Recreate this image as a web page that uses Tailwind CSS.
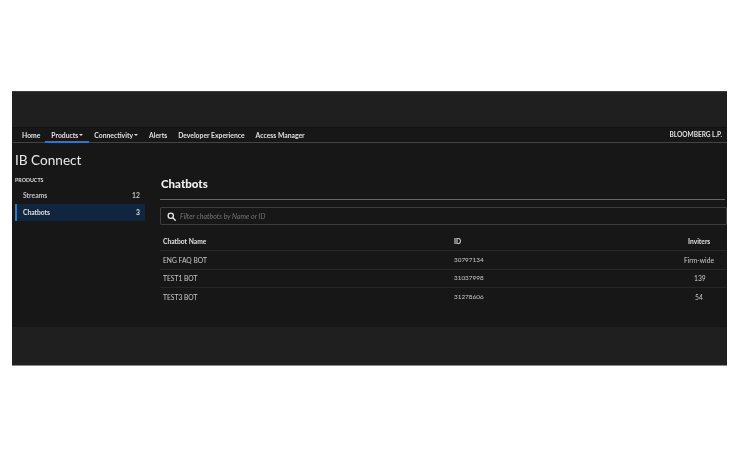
<!DOCTYPE html>
<html lang="en">
<head>
    <meta charset="UTF-8">
    <title>IB Connect</title>
    <script src="https://cdn.jsdelivr.net/npm/@tailwindcss/browser@4"></script>
</head>
<body class="bg-white font-['Lato','Liberation_Sans',sans-serif]">
    <div class="pt-[91px] pl-[12px] h-[463px] w-[750px] overflow-hidden">
        <div class="w-[715px] h-[275px] flex flex-col bg-[#1f1f1f] border-t border-b border-t-[#3a3a3a] border-b-[#8a8a8a] overflow-hidden blur-[0.3px]">
            <!-- top band -->
            <div class="h-[35px] shrink-0 bg-[#1f1f1f]"></div>

            <!-- nav -->
            <div class="h-[14px] shrink-0 flex items-stretch justify-between bg-[#171717] border-t border-[#111] border-b border-b-[#444] box-content text-[6.8px] text-[#e0e0e0] font-bold">
                <div class="flex items-center gap-[11px] pl-[10px]">
                    <span>Home</span>
                    <span class="relative h-full flex items-center">Products<span class="ml-[1px] border-x-[2px] border-t-[2px] border-x-transparent border-t-[#ddd]"></span><span class="absolute -left-[6px] -right-[6px] bottom-[-1px] h-[2px] bg-[#2a78c8]"></span></span>
                    <span class="flex items-center">Connectivity<span class="ml-[1px] border-x-[2px] border-t-[2px] border-x-transparent border-t-[#ddd]"></span></span>
                    <span>Alerts</span>
                    <span>Developer Experience</span>
                    <span>Access Manager</span>
                </div>
                <div class="flex items-center pr-[5px] text-[6.5px]">BLOOMBERG L.P.</div>
            </div>

            <!-- main -->
            <div class="h-[184px] shrink-0 bg-[#171717] flex">
                <aside class="w-[133px] shrink-0 pl-[3px]">
                    <h1 class="text-[13.6px] leading-[18px] text-[#e8e8e8] mt-[8px] font-normal">IB Connect</h1>
                    <div class="mt-[8px] text-[5.3px] leading-[7px] font-bold text-[#ddd]">PRODUCTS</div>
                    <div class="mt-[3px] h-[17px] flex items-center justify-between pl-[8px] pr-[5px] text-[6.8px] font-bold text-[#c4c4c4]">
                        <span>Streams</span><span>12</span>
                    </div>
                    <div class="h-[17px] flex items-center justify-between border-l-2 border-[#2a78c8] bg-[#10263f] pl-[6px] pr-[5px] text-[6.7px] font-bold text-[#e0e0e0]">
                        <span>Chatbots</span><span>3</span>
                    </div>
                </aside>

                <section class="flex-1 min-w-0 pl-[15px]">
                    <h2 class="mt-[34px] ml-[1px] text-[11.5px] leading-[14px] font-black text-[#f0f0f0]">Chatbots</h2>
                    <div class="mt-[8px] mr-[2px] h-[1px] bg-[#666]"></div>
                    <div class="mt-[7px] h-[18px] flex items-center border border-[#3d3d3d] rounded-[1px] pl-[6px]">
                        <svg class="w-[9px] h-[9px] text-[#e8e8e8]" viewBox="0 0 24 24" fill="none" stroke="currentColor" stroke-width="3.5" stroke-linecap="round"><circle cx="10" cy="10" r="7"/><path d="M15.5 15.5L22 22"/></svg>
                        <span class="ml-[4px] text-[7px] italic text-[#757575]">Filter chatbots by Name or ID</span>
                    </div>

                    <div class="mt-[7px] text-[6.7px]">
                        <div class="h-[19px] flex items-center border-b border-[#262626] font-bold text-[#e0e0e0]">
                            <span class="w-[294px] pl-[3px]">Chatbot Name</span>
                            <span class="flex-1">ID</span>
                            <span class="w-[50px] pl-[11px]">Inviters</span>
                        </div>
                        <div class="h-[18.5px] flex items-center border-b border-[#262626] text-[#cacaca]">
                            <span class="w-[294px] pl-[3px]">ENG FAQ BOT</span>
                            <span class="flex-1 text-[6.4px]">30797134</span>
                            <span class="w-[50px] pl-[7px]">Firm-wide</span>
                        </div>
                        <div class="h-[18.5px] flex items-center border-b border-[#262626] text-[#cacaca]">
                            <span class="w-[294px] pl-[3px]">TEST1 BOT</span>
                            <span class="flex-1 text-[6.4px]">31037998</span>
                            <span class="w-[50px] pl-[17px]">139</span>
                        </div>
                        <div class="h-[18.5px] flex items-center text-[#cacaca]">
                            <span class="w-[294px] pl-[3px]">TEST3 BOT</span>
                            <span class="flex-1 text-[6.4px]">31278606</span>
                            <span class="w-[50px] pl-[18px]">54</span>
                        </div>
                    </div>
                </section>
            </div>

            <!-- footer band -->
            <div class="flex-1 bg-[#1f1f1f]"></div>
        </div>
    </div>
</body>
</html>
